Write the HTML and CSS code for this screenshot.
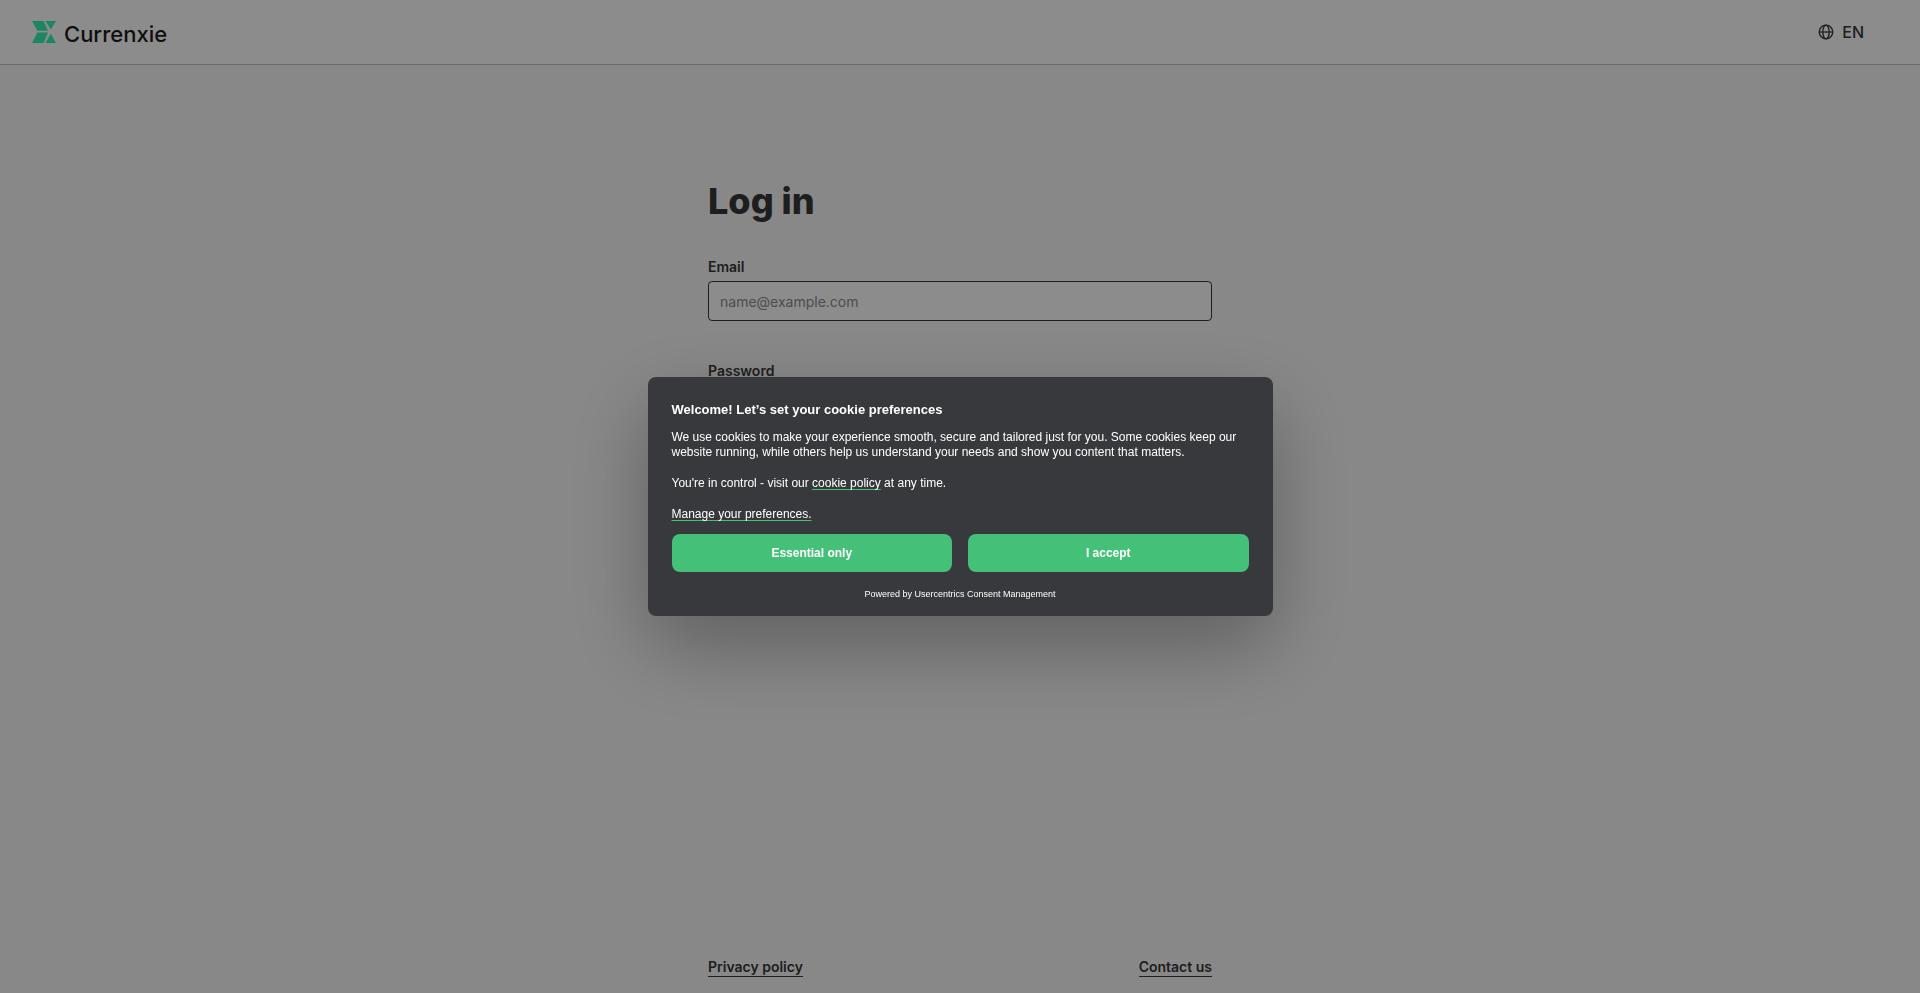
FILE: index.html
```
<!DOCTYPE html>
<html lang="en">
<head>
  <meta charset="UTF-8">
  <meta name="viewport" content="width=device-width, initial-scale=1">
  <title>Log in - Currenxie</title>
  <link rel="stylesheet" href="styles.css">
</head>
<body>
  <header class="header">
    <a class="logo" href="#">
      <svg class="logo-mark" viewBox="0 0 24 22" aria-hidden="true">
        <path d="M0 0h11.6l4.4 9.8H5.4z"/>
        <path d="M13.4 0H24l-5.2 8.6z"/>
        <path d="M5.4 11.6H16L11.6 22H0z"/>
        <path d="M18.8 12.8L24 22H13.4z"/>
      </svg>
      <span class="logo-text">Currenxie</span>
    </a>
    <button class="language" type="button">
      <svg class="globe" viewBox="0 0 16 16" aria-hidden="true">
        <circle cx="8" cy="8" r="6.8"/>
        <ellipse cx="8" cy="8" rx="3.2" ry="6.8"/>
        <path d="M1.2 8h13.6"/>
      </svg>
      EN
    </button>
  </header>

  <main class="login">
    <h1>Log in</h1>
    <form>
      <div class="field">
        <label for="email">Email</label>
        <input type="email" id="email" placeholder="name@example.com">
      </div>
      <div class="field">
        <label for="password">Password</label>
        <input type="password" id="password">
      </div>
    </form>
  </main>

  <footer class="footer">
    <a href="#">Privacy policy</a>
    <a href="#">Contact us</a>
  </footer>

  <!-- Cookie consent -->
  <div class="overlay">
    <section class="consent" role="dialog" aria-labelledby="consent-title">
      <h2 id="consent-title">Welcome! Let’s set your cookie preferences</h2>
      <p>We use cookies to make your experience smooth, secure and tailored just for you. Some cookies keep our website running, while others help us understand your needs and show you content that matters.</p>
      <p>You're in control - visit our <a href="#">cookie policy</a> at any time.</p>
      <p><a href="#">Manage your preferences.</a></p>
      <div class="consent-buttons">
        <button type="button">Essential only</button>
        <button type="button">I accept</button>
      </div>
      <div class="powered">Powered by Usercentrics Consent Management</div>
    </section>
  </div>
</body>
</html>
```
FILE: styles.css
```
* {
  box-sizing: border-box;
}
body {
  display: flex;
  flex-direction: column;
  min-height: 100vh;
  margin: 0;
  background-color: #f7f7f7;
  color: #383838;
  font-family: Inter, sans-serif;
  font-size: 14px;
  line-height: 20px;
}
.header {
  display: flex;
  align-items: center;
  justify-content: space-between;
  height: 65px;
  padding: 0 56px 0 32px;
  background-color: #fff;
  border-bottom: 1px solid #c4c4c4;
}
.logo {
  display: flex;
  align-items: center;
  gap: 8px;
  color: #1c1c1c;
  text-decoration: none;
}
.logo-mark {
  width: 24px;
  height: 22px;
  fill: #34f5b0;
}
.logo-text {
  padding-top: 4px;
  font-size: 22px;
  font-weight: 500;
  line-height: 24px;
}
.language {
  display: flex;
  align-items: center;
  gap: 8px;
  padding: 0;
  border: 0;
  background: none;
  color: #383838;
  font: 500 16px/20px Inter, sans-serif;
  cursor: pointer;
}
.globe {
  width: 16px;
  height: 16px;
  fill: none;
  stroke: currentColor;
  stroke-width: 1.3;
}
.login {
  flex: 1;
  width: 100%;
  max-width: 504px;
  margin: 0 auto;
  padding-top: 112px;
}
h1 {
  margin: 0 0 32px;
  font-size: 36px;
  font-weight: 800;
  line-height: 48px;
}
.field {
  margin-bottom: 40px;
}
.field label {
  display: block;
  margin-bottom: 4px;
  font-weight: 600;
}
.field input {
  display: block;
  width: 100%;
  height: 40px;
  padding: 0 11px;
  border: 1px solid #383838;
  border-radius: 4px;
  background-color: #fff;
  color: #383838;
  font: 14px/20px Inter, sans-serif;
}
.field input::placeholder {
  color: #8a8d92;
}
.footer {
  display: flex;
  justify-content: space-between;
  width: 100%;
  max-width: 504px;
  margin: 0 auto;
  padding-bottom: 16px;
}
.footer a {
  border-bottom: 1px solid #383838;
  color: #383838;
  font-weight: 600;
  line-height: 18px;
  text-decoration: none;
}
.overlay {
  position: fixed;
  inset: 0;
  display: flex;
  align-items: center;
  justify-content: center;
  background-color: rgba(0, 0, 0, 0.45);
}
.consent {
  width: 625px;
  padding: 24px 24px 16px;
  border-radius: 8px;
  background-color: #38393c;
  box-shadow: 0 30px 80px rgba(0, 0, 0, 0.3);
  color: #fff;
  font-family: "Liberation Sans", Arial, sans-serif;
  font-size: 12px;
  line-height: 15px;
}
.consent h2 {
  margin: 0 0 12px;
  font-size: 13px;
  font-weight: 700;
  line-height: 17px;
}
.consent p {
  margin: 0 0 16px;
}
.consent a {
  color: #fff;
  text-decoration-color: #45c078;
  text-underline-offset: 2px;
}
.consent-buttons {
  display: flex;
  gap: 16px;
  margin: -4px 0 16px;
}
.consent-buttons button {
  flex: 1;
  height: 38px;
  border: 0;
  border-radius: 8px;
  background-color: #45c078;
  color: #fff;
  font: 700 12px/16px "Liberation Sans", Arial, sans-serif;
  cursor: pointer;
}
.powered {
  font-size: 9px;
  line-height: 12px;
  text-align: center;
}
```
